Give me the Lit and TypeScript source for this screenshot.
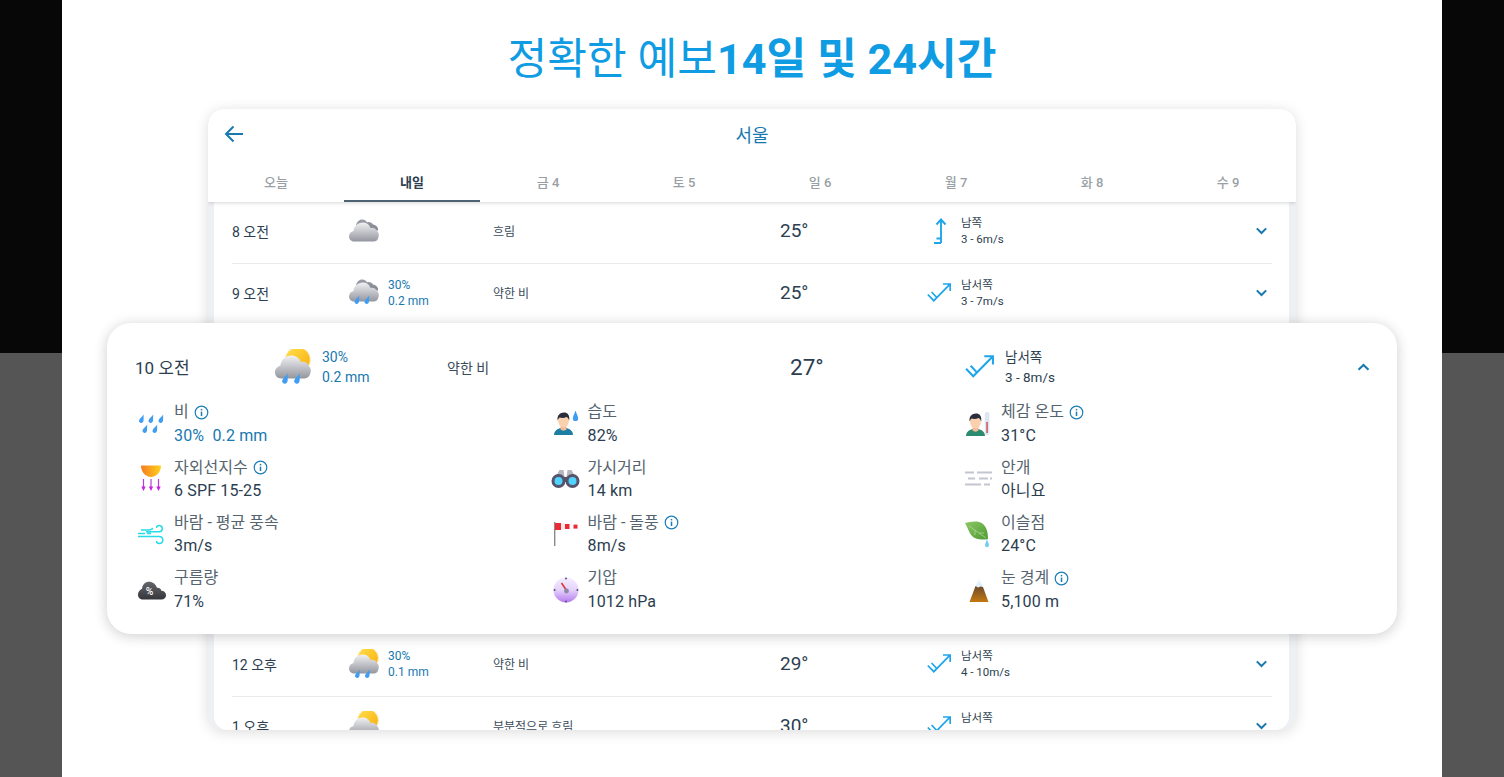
import { LitElement, html, css, svg } from "lit";
import { customElement } from "lit/decorators.js";

const Defs = html`<svg class="defs" width="0" height="0" aria-hidden="true">
  <defs>
    <linearGradient id="cf" x1="0" y1="0" x2="0" y2="1"><stop offset="0" stop-color="#f1f1f3"/><stop offset="1" stop-color="#94969f"/></linearGradient>
    <linearGradient id="cb" x1="0" y1="0" x2="0" y2="1"><stop offset="0" stop-color="#9c9ea8"/><stop offset="1" stop-color="#7f818d"/></linearGradient>
    <linearGradient id="sun" x1="0" y1="0" x2="1" y2="1"><stop offset="0" stop-color="#ffdf4a"/><stop offset="1" stop-color="#f8ad0c"/></linearGradient>
    <linearGradient id="uv" x1="0" y1="0" x2="1" y2="0"><stop offset="0" stop-color="#f57c1f"/><stop offset="1" stop-color="#ffd11f"/></linearGradient>
    <linearGradient id="dk" x1="0" y1="0" x2="0" y2="1"><stop offset="0" stop-color="#66676c"/><stop offset="1" stop-color="#35363b"/></linearGradient>
    <linearGradient id="baro" x1="0" y1="0" x2="0" y2="1"><stop offset="0" stop-color="#f4eeff"/><stop offset=".5" stop-color="#e4d2fb"/><stop offset="1" stop-color="#b679ee"/></linearGradient>
    <linearGradient id="mt" x1="0" y1="0" x2="0" y2="1"><stop offset="0" stop-color="#6b4a2e"/><stop offset="1" stop-color="#c4780f"/></linearGradient>
    <linearGradient id="snow" x1="0" y1="0" x2="0" y2="1"><stop offset="0" stop-color="#ffffff"/><stop offset="1" stop-color="#d6ecfb"/></linearGradient>
    <linearGradient id="leaf" x1="0" y1="0" x2="1" y2="1"><stop offset="0" stop-color="#8cc864"/><stop offset="1" stop-color="#4f9a34"/></linearGradient>
  </defs>
</svg>`;

const frontD = "M5 22.5C2 22.5 0 20 0 17.5C0 14.5 2 12.5 4.5 12C5 7 9 3.5 13.5 3.5C17.5 3.5 20.5 5.5 21.5 9C24 8 27.5 9.5 28.5 12.5C30 14 30 16 29.5 18C29 21 27 22.5 24.5 22.5Z";
const backD = "M7 6C8 2 11 0 14 .5C16 .8 17.5 2 18 3.5C20 2.5 23 3.5 24 5.5C27 6 29.5 8 29 11.5L20 11.5Z";
const drop = (x: number, y: number, s = 1, fill = "#3f9df2", rot = 22) =>
  svg`<path transform="translate(${x} ${y}) rotate(${rot}) scale(${s})" d="M0 -6C.8 -3 2.2 -1.2 2.2 .8A2.2 2.2 0 0 1 -2.2 .8C-2.2 -1.2 -.8 -3 0 -6Z" fill=${fill}/>`;

const iconCloud = () => html`<svg viewBox="0 0 30 23" width="30" height="23">
  <path d=${backD} fill="url(#cb)"/><path d=${frontD} fill="url(#cf)"/></svg>`;

const iconRain = () => html`<svg viewBox="0 0 30 27" width="30" height="27">
  <path d=${backD} fill="url(#cb)"/><path d=${frontD} fill="url(#cf)"/>${drop(8, 22, 1)}${drop(18, 22, 1)}</svg>`;

const sunDisc = () => svg`<circle cx="19" cy="9" r="10" fill="url(#sun)"/>
  <circle cx="19" cy="9" r="10.3" fill="none" stroke="#f9c21e" stroke-width=".8" stroke-dasharray=".8 .9"/>`;

const iconSunRain = (w = 30, h = 30) => html`<svg viewBox="0 0 30 30" width=${w} height=${h}>
  ${sunDisc()}<path transform="translate(0 2)" d=${frontD} fill="url(#cf)"/>${drop(8.5, 26, 1)}${drop(18.5, 26, 1)}</svg>`;

const iconSunCloud = () => html`<svg viewBox="0 0 30 30" width="30" height="30">
  ${sunDisc()}<path transform="translate(0 3)" d=${frontD} fill="url(#cf)"/></svg>`;

const windSouth = () => html`<svg viewBox="0 0 24 26" width="24" height="26" fill="none" stroke="#1fa5ea" stroke-width="1.9">
  <path d="M14 25V2M9.5 6.5L14 1.5L18.5 6.5M7 25H14M9.5 20.5H14"/></svg>`;

const windSW = (w = 24, h = 20) => html`<svg viewBox="0 0 24 20" width=${w} height=${h} fill="none" stroke="#1fa5ea" stroke-width="1.7">
  <path d="M.8 11.5L6.8 17.7L23 1.2M16 1H23.2V8M4.6 9L9.8 14.5"/></svg>`;

const chevDown = () => html`<svg class="chev" viewBox="0 0 13 8" width="13" height="8" fill="none" stroke="#1878b0" stroke-width="2"><path d="M1.8 1.4L6.5 6L11.2 1.4"/></svg>`;
const chevUp = () => html`<svg class="chev" viewBox="0 0 13 8" width="13" height="8" fill="none" stroke="#1878b0" stroke-width="2"><path d="M1.5 6.8L6.5 2L11.5 6.8"/></svg>`;

const info = () => html`<svg class="info" viewBox="0 0 15 15" width="15" height="15" fill="none" stroke="#1b7db7">
  <circle cx="7.5" cy="7.5" r="6.3" stroke-width="1.2"/><path d="M7.5 6.6V11" stroke-width="1.5"/><path d="M7.5 3.9V5.4" stroke-width="1.5"/></svg>`;

const icDrops = () => html`<svg viewBox="0 0 28 24" width="28" height="24">
  ${drop(4.5, 8, 1)}${drop(14, 8, 1)}${drop(24, 8, 1)}${drop(8, 18, 1)}${drop(18, 18, 1)}</svg>`;

const arrowP = (x: number) => svg`<path d="M${x} 14V24" stroke="#b53adf" stroke-width="1.2"/><path d="M${x - 2.2} 21.5H${x + 2.2}L${x} 26Z" fill="#c625e6"/>`;
const icUV = () => html`<svg viewBox="0 0 28 27" width="28" height="27">
  <path d="M4 0.5H24C24 7 19.5 12 14 12C8.5 12 4 7 4 0.5Z" fill="url(#uv)"/>${arrowP(6.5)}${arrowP(14)}${arrowP(21.5)}</svg>`;

const icWind = () => html`<svg viewBox="0 0 28 22" width="28" height="22" fill="none" stroke="#27dbe8" stroke-width="1.5">
  <path d="M1 10.5H8M4 7H12C14 7 14.5 6 16 5.5M9 8.8H22C26 9 26.5 3 22.5 2.5C20.5 2.4 19.5 3.5 19.5 5M1 13.5H22C27 13.5 27 20.5 22.5 20.5C20.5 20.5 19.5 19.2 19.5 18M10 10.5H14"/></svg>`;

const icCloudPct = () => html`<svg viewBox="-1 -1 32 23.5" width="30" height="22">
  <path d="M5.5 21H25C28 21 30 18.8 30 16.3C30 13.5 27.8 11.5 25 11.5C24.6 9.5 22.6 8 20.3 8.3C18.8 4 15 1.5 11 2C7 2.5 4.5 6 4.4 9.5C1.8 10.7 0 13 0 15.8C0 18.8 2.3 21 5.5 21Z" fill="url(#dk)"/>
  <text x="12.5" y="16" text-anchor="middle" font-size="11" font-weight="500" font-family="Roboto" fill="#fff">%</text></svg>`;

const person = (shirt: string) => svg`
  <path d="M1 24C1 19.5 5 17.5 8 17L13 17C16 17.5 20 19.5 20 24Z" fill=${shirt}/>
  <path d="M7.5 13H13.5V18.5C12 20 9 20 7.5 18.5Z" fill="#f3bb95"/>
  <ellipse cx="10.5" cy="10" rx="5.4" ry="6.5" fill="#fbd0ae"/>
  <path d="M4.7 9.5C3.6 4.5 7 1.5 11 1.5C14.5 1.5 17 4 16.2 9.5C15.5 7.5 14.6 6.3 13.5 6C11 7.3 8 7 6.5 6.5C5.5 7.5 5 8.5 4.7 9.5Z" fill="#2a2d3b"/>`;

const icPersonDrop = () => html`<svg viewBox="-2 0 30 25" width="30" height="25">${person("#1d7ea3")}${drop(22.5, 6.5, 1.2, "#3f9df2", 0)}</svg>`;

const icBino = () => html`<svg viewBox="0 0 29 20" width="29" height="20">
  <path d="M5 7L8.5 1H12.5L13.5 8ZM24 7L20.5 1H16.5L15.5 8Z" fill="#b5b6bf"/>
  <rect x="11.5" y="8" width="6" height="5" fill="#56536b"/>
  <circle cx="7.5" cy="12" r="7" fill="#56536b"/><circle cx="21.5" cy="12" r="7" fill="#56536b"/>
  <circle cx="7.5" cy="12" r="4" fill="#4fd3ff"/><circle cx="21.5" cy="12" r="4" fill="#4fd3ff"/></svg>`;

const icSock = () => html`<svg viewBox="0 0 28 26" width="28" height="26">
  <rect x="3" y="1" width="1.4" height="24" fill="#8a8a8c"/>
  <path d="M4 2H10V9H4Z" fill="#ee2936"/><path d="M10 2.6H14V8.4H10Z" fill="#fde8e8"/>
  <path d="M14 3H18.5V8H14Z" fill="#ee2936"/><path d="M22.5 3.6H26.5V7.6H22.5Z" fill="#ee2936"/></svg>`;

const icBaro = () => html`<svg viewBox="-2 0 30 26" width="30" height="26">
  <circle cx="13" cy="13" r="12.5" fill="url(#baro)"/>
  <circle cx="13" cy="1.6" r="1" fill="#56507a"/><circle cx="13" cy="24.4" r="1" fill="#56507a"/><circle cx="1.6" cy="13" r="1" fill="#56507a"/><circle cx="24.4" cy="13" r="1" fill="#56507a"/>
  <path d="M8.5 6L13.6 13.5" stroke="#d9342f" stroke-width="1.5"/><circle cx="13.5" cy="14" r="2.4" fill="#8f87a8"/></svg>`;

const icPersonThermo = () => html`<svg viewBox="0 0 26 26" width="26" height="26"><g transform="translate(1 1)">${person("#2c8a70")}</g>
  <rect x="20.8" y="1" width="4.6" height="23" rx="2.3" fill="#dbe6f0"/><rect x="22.4" y="11" width="1.3" height="11" fill="#d33c4a"/></svg>`;

const icFog = () => html`<svg viewBox="0 0 29 15" width="29" height="15" fill="none" stroke="#c3c5d0" stroke-width="2">
  <path d="M1 1.5H10M13 1.5H28M4 7.5H11M15 7.5H24M26 7.5H28M1 13.5H17M20 13.5H26"/></svg>`;

const icLeaf = () => html`<svg viewBox="0 0 26 27" width="26" height="27">
  <path d="M1 2C6 1 14 -1 19 3C23 6.5 24 12 24 18C18 19 12 19 8 15C5 12 4 7 1 2Z" fill="url(#leaf)"/>
  <path d="M5 5L22 17M11 9V14M15 12H20" stroke="#b7dd9b" stroke-width=".7" fill="none"/>${drop(23, 23.5, 0.9, "#74cdf4", 0)}</svg>`;

const icMount = () => html`<svg viewBox="-4 0 26 26" width="26" height="26">
  <path d="M11 .5L15 9.5H7.5Z" fill="url(#snow)"/>
  <path d="M7.5 9L10 10.5L12.5 9.5L15 10L20.5 25H1.5Z" fill="url(#mt)"/></svg>`;

const backArrow = () => html`<svg viewBox="0 0 20 18" width="20" height="18" fill="none" stroke="#1878b0" stroke-width="2"><path d="M19 9H2M9.5 1.5L2 9L9.5 16.5"/></svg>`;

interface Row { t: string; icon: () => unknown; p?: [string, string]; d: string; temp: string; wi: () => unknown; dir: string; sp: string; }

const top: Row[] = [
  { t: "8 오전", icon: iconCloud, d: "흐림", temp: "25°", wi: windSouth, dir: "남쪽", sp: "3 - 6m/s" },
  { t: "9 오전", icon: iconRain, p: ["30%", "0.2 mm"], d: "약한 비", temp: "25°", wi: () => windSW(), dir: "남서쪽", sp: "3 - 7m/s" },
];
const bottom: Row[] = [
  { t: "12 오후", icon: () => iconSunRain(), p: ["30%", "0.1 mm"], d: "약한 비", temp: "29°", wi: () => windSW(), dir: "남서쪽", sp: "4 - 10m/s" },
  { t: "1 오후", icon: iconSunCloud, d: "부분적으로 흐림", temp: "30°", wi: () => windSW(), dir: "남서쪽", sp: "6 - 12m/s" },
];

const tabs = ["오늘", "내일", "금 4", "토 5", "일 6", "월 7", "화 8", "수 9"];

const details: { ic: () => unknown; l: string; v: string; i?: boolean; blue?: boolean }[] = [
  { ic: icDrops, l: "비", v: "30%  0.2 mm", i: true, blue: true },
  { ic: icPersonDrop, l: "습도", v: "82%" },
  { ic: icPersonThermo, l: "체감 온도", v: "31°C", i: true },
  { ic: icUV, l: "자외선지수", v: "6 SPF 15-25", i: true },
  { ic: icBino, l: "가시거리", v: "14 km" },
  { ic: icFog, l: "안개", v: "아니요" },
  { ic: icWind, l: "바람 - 평균 풍속", v: "3m/s" },
  { ic: icSock, l: "바람 - 돌풍", v: "8m/s", i: true },
  { ic: icLeaf, l: "이슬점", v: "24°C" },
  { ic: icCloudPct, l: "구름량", v: "71%" },
  { ic: icBaro, l: "기압", v: "1012 hPa" },
  { ic: icMount, l: "눈 경계", v: "5,100 m", i: true },
];

@customElement("app-root")
export class AppRoot extends LitElement {
  static styles = css`
    :host {
      display: block;
      height: 777px;
      overflow: hidden;
      background: linear-gradient(#070707 353px, #555 353px);
      font-family: Roboto, "Noto Sans CJK KR", sans-serif;
      color: #2c3e50;
    }
    .defs { position: absolute; }
    .panel {
      position: relative;
      margin: 0 62px;
      height: 777px;
      background: #fff;
      display: flex;
      flex-direction: column;
      align-items: center;
    }
    h1 {
      margin: 36px 0 25px;
      font-size: 43.2px;
      line-height: 48px;
      font-weight: 400;
      color: #0f9ce3;
      white-space: nowrap;
    }
    h1 b { font-weight: 700; }
    .card {
      width: 1088px;
      height: 621px;
      border-radius: 16px;
      background: #eef0f3;
      box-shadow: 0 2px 14px rgba(0, 0, 0, .14);
      display: flex;
      flex-direction: column;
      overflow: hidden;
    }
    .head {
      background: #fff;
      box-shadow: 0 1px 4px rgba(0, 0, 0, .16);
      position: relative;
      z-index: 1;
      flex: none;
    }
    .bar {
      height: 52px;
      box-sizing: border-box;
      padding-bottom: 2px;
      display: grid;
      grid-template-columns: 52px 1fr 52px;
      align-items: center;
    }
    .back { display: flex; padding-left: 16px; }
    .city { text-align: center; font-size: 18px; color: #1878b0; }
    .tabs { display: grid; grid-template-columns: repeat(8, 136px); height: 41px; }
    .tab {
      display: flex;
      align-items: center;
      justify-content: center;
      font-size: 13px;
      font-weight: 500;
      color: #989fa5;
      padding-top: 1px;
      border-bottom: 2px solid transparent;
    }
    .tab.on { color: #2c3e50; font-weight: 700; border-bottom-color: #4f6473; }
    .list {
      flex: 1;
      min-height: 0;
      margin: 0 7px 0 6px;
      background: #fff;
      overflow: hidden;
      border-radius: 0 0 14px 14px;
    }
    .row {
      height: 62px;
      box-sizing: border-box;
      margin: 0 17px 0 18px;
      border-bottom: 1px solid #e8eaec;
      display: grid;
      grid-template-columns: 117px 39px 105px 287px 147px 34px 294px 13px;
      align-items: center;
    }
    .row > * { position: relative; top: -2px; }
    .gap { height: 309px; }
    .time { font-size: 14px; }
    .ric { display: flex; }
    .prec { font-size: 12px; line-height: 16px; color: #1878b0; }
    .desc { font-size: 12px; color: #3b4c5b; }
    .temp { font-size: 19px; color: #2c3e50; }
    .wic { display: flex; justify-content: flex-start; }
    .wtx { font-size: 11.5px; line-height: 16px; color: #2c3e50; white-space: nowrap; }
    .chev { display: block; }
    .exp {
      position: absolute;
      left: 45px;
      top: 323px;
      width: 1290px;
      height: 311px;
      box-sizing: border-box;
      background: #fff;
      border-radius: 24px;
      box-shadow: 0 2px 14px rgba(0, 0, 0, .2);
      padding: 0 26px 0 28px;
    }
    .ehead {
      height: 87px;
      display: grid;
      grid-template-columns: 140px 47px 125px 343px 175px 40px 352px 13px;
      align-items: center;
    }
    .etime { font-size: 17px; }
    .eprec { font-size: 14px; line-height: 20px; color: #1878b0; }
    .edesc { font-size: 14px; color: #3b4c5b; }
    .etemp { font-size: 22.5px; }
    .ewtx { font-size: 13.5px; line-height: 20px; white-space: nowrap; }
    .dgrid {
      display: grid;
      grid-template-columns: repeat(3, 413.5px);
      grid-auto-rows: 55.3px;
      margin-left: 2px;
      margin-top: -14px;
    }
    .d { display: grid; grid-template-columns: 37px 1fr; align-items: center; }
    .dic { display: flex; }
    .dl { font-size: 16px; line-height: 23.5px; color: #55646f; display: flex; align-items: center; gap: 5px; }
    .dv { font-size: 16px; line-height: 23px; letter-spacing: .15px; color: #2c3e50; white-space: pre; }
    .dv.b { color: #1878b0; }
  `;

  private row(r: Row) {
    return html`<div class="row">
      <div class="time">${r.t}</div>
      <div class="ric">${r.icon()}</div>
      <div class="prec">${r.p ? html`${r.p[0]}<br />${r.p[1]}` : ""}</div>
      <div class="desc">${r.d}</div>
      <div class="temp">${r.temp}</div>
      <div class="wic">${r.wi()}</div>
      <div class="wtx">${r.dir}<br />${r.sp}</div>
      ${chevDown()}
    </div>`;
  }

  render() {
    return html`${Defs}
      <div class="panel">
        <h1>정확한 예보<b>14일 및 24시간</b></h1>
        <div class="card">
          <div class="head">
            <div class="bar"><div class="back">${backArrow()}</div><div class="city">서울</div><div></div></div>
            <div class="tabs">${tabs.map((t, i) => html`<div class="tab ${i === 1 ? "on" : ""}">${t}</div>`)}</div>
          </div>
          <div class="list">
            ${top.map((r) => this.row(r))}
            <div class="gap"></div>
            ${bottom.map((r) => this.row(r))}
          </div>
        </div>
        <div class="exp">
          <div class="ehead">
            <div class="etime">10 오전</div>
            <div class="ric">${iconSunRain(36, 36)}</div>
            <div class="eprec">30%<br />0.2 mm</div>
            <div class="edesc">약한 비</div>
            <div class="etemp">27°</div>
            <div class="wic">${windSW(29, 24)}</div>
            <div class="ewtx">남서쪽<br />3 - 8m/s</div>
            ${chevUp()}
          </div>
          <div class="dgrid">
            ${details.map((d) => html`<div class="d">
              <div class="dic">${d.ic()}</div>
              <div>
                <div class="dl">${d.l}${d.i ? info() : ""}</div>
                <div class="dv ${d.blue ? "b" : ""}">${d.v}</div>
              </div>
            </div>`)}
          </div>
        </div>
      </div>`;
  }
}
